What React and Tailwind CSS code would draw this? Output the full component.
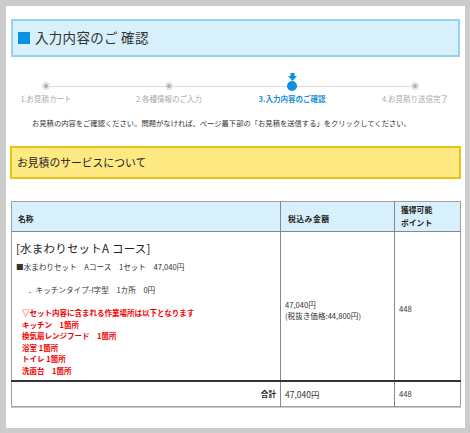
const steps = [
  { label: '1.お見積カート', active: false },
  { label: '2.各種情報のご入力', active: false },
  { label: '3.入力内容のご確認', active: true },
  { label: '4.お見積り送信完了', active: false },
];

const places = [
  'キッチン　1箇所',
  '換気扇レンジフード　1箇所',
  '浴室 1箇所',
  'トイレ 1箇所',
  '洗面台　1箇所',
];

function Dot({ active }) {
  if (active) {
    return <span className="block w-[10px] h-[10px] rounded-full bg-[#0a92e0]" />;
  }
  return (
    <span className="flex items-center justify-center w-[8px] h-[8px] rounded-full bg-[#e6e6e6]">
      <span className="block w-[4px] h-[4px] rounded-full bg-[#b0b0b0]" />
    </span>
  );
}

export default function App() {
  return (
    <div
      className="w-[470px] h-[433px] bg-[#cccccc] pt-[6px] pl-[6px] pr-[5px] pb-[5px] text-[#333]"
      style={{ fontFamily: '"Noto Sans CJK JP", "Noto Sans", sans-serif' }}
    >
      <div className="h-full bg-white pt-[13px] px-[5px]">

        {/* TITLE */}
        <div className="h-[38px] border-2 border-[#93d2f3] bg-[#d8effc] flex items-center pl-[5px]">
          <span className="block w-[12px] h-[12px] bg-[#0a92e0] mr-[5px]" />
          <h1 className="text-[13.5px] leading-none tracking-[0.3px] text-[#333]">入力内容のご 確認</h1>
        </div>

        {/* STEPPER */}
        <div className="relative -ml-[5px] mt-[14px] flex gap-[43px]">
          <div className="absolute left-[40px] w-[369px] top-[14.5px] h-px bg-[#dcdcdc]" />
          {steps.map((s) => (
            <div key={s.label} className="relative w-[80px] flex flex-col items-center">
              <div className="h-[10px] flex items-end">
                {s.active && (
                  <svg width="9" height="8" viewBox="0 0 9 8">
                    <rect x="2.5" y="0" width="4" height="3.5" fill="#0a92e0" />
                    <polygon points="0,3 9,3 4.5,8" fill="#0a92e0" />
                  </svg>
                )}
              </div>
              <div className="h-[10px] flex items-center justify-center">
                <Dot active={s.active} />
              </div>
              <span
                className={`mt-[4px] text-[7.5px] leading-none whitespace-nowrap ${
                  s.active ? 'text-[#1c8fd6] font-bold' : 'text-[#a8a8a8]'
                }`}
              >
                {s.label}
              </span>
            </div>
          ))}
        </div>

        {/* DESCRIPTION */}
        <p className="mt-[17px] pl-[21px] text-[7.3px] leading-none text-[#333] whitespace-nowrap">
          お見積の内容をご確認ください。問題がなければ、ページ最下部の「お見積を送信する」をクリックしてください。
        </p>

        {/* SECTION HEADING */}
        <div className="mt-[19px] -mx-px h-[33px] border-[2px] border-[#e8c412] bg-[#ffe983] flex items-center pl-[5px]">
          <h2 className="text-[10.8px] leading-none text-[#222]">お見積のサービスについて</h2>
        </div>

        {/* TABLE */}
        <table className="mt-[22px] w-[449px] border-collapse table-fixed border border-[#a0a0a0] shadow-[0_1px_0_#c8c8c8]">
          <colgroup>
            <col className="w-[269px]" />
            <col className="w-[114px]" />
            <col className="w-[66px]" />
          </colgroup>
          <thead>
            <tr className="h-[30px] bg-[#d8effc] text-[7.8px] font-bold text-[#222]">
              <th className="text-left font-bold pl-[6px] pt-[5px] border-r border-b border-[#888]">名称</th>
              <th className="text-left font-bold pl-[7px] pt-[5px] tracking-[0.5px] border-r border-b border-[#888]">税込み金額</th>
              <th className="text-left font-bold pl-[6px] leading-[13px] border-b border-[#888]">
                獲得可能<br />ポイント
              </th>
            </tr>
          </thead>
          <tbody>
            <tr className="h-[150px] align-middle">
              <td className="align-top pl-[4px] pt-[11px] border-r border-[#888]">
                <div className="text-[11.5px] leading-none text-[#222] tracking-[0.2px]">[水まわりセットA コース]</div>
                <div className="mt-[9px] text-[7.6px] leading-none text-[#333] whitespace-nowrap">
                  ■水まわりセット　Aコース　1セット　47,040円
                </div>
                <div className="mt-[15px] pl-[12px] text-[7.6px] leading-none text-[#333] whitespace-nowrap">
                  ．キッチンタイプ-I字型　1カ所　0円
                </div>
                <div className="mt-[14px] pl-[6px] text-[7.5px] leading-[11.5px] font-bold text-[#f20000]">
                  <div>▽セット内容に含まれる作業場所は以下となります</div>
                  {places.map((p) => (
                    <div key={p}>{p}</div>
                  ))}
                </div>
              </td>
              <td className="pl-[4px] pt-[8px] border-r border-[#888] text-[7.6px] leading-[11px] text-[#333]">
                47,040円
                <br />
                (税抜き価格:44,800円)
              </td>
              <td className="pl-[4px] pt-[5px] text-[7.6px] text-[#333]">448</td>
            </tr>
            <tr className="h-[25px] border-t-[2px] border-[#333]">
              <td className="text-right pr-[4px] text-[7.6px] font-bold text-[#222] border-r border-[#888]">合計</td>
              <td className="pl-[4px] text-[8.5px] text-[#333] border-r border-[#888]">47,040円</td>
              <td className="pl-[4px] text-[7.6px] text-[#333]">448</td>
            </tr>
          </tbody>
        </table>
      </div>
    </div>
  );
}
